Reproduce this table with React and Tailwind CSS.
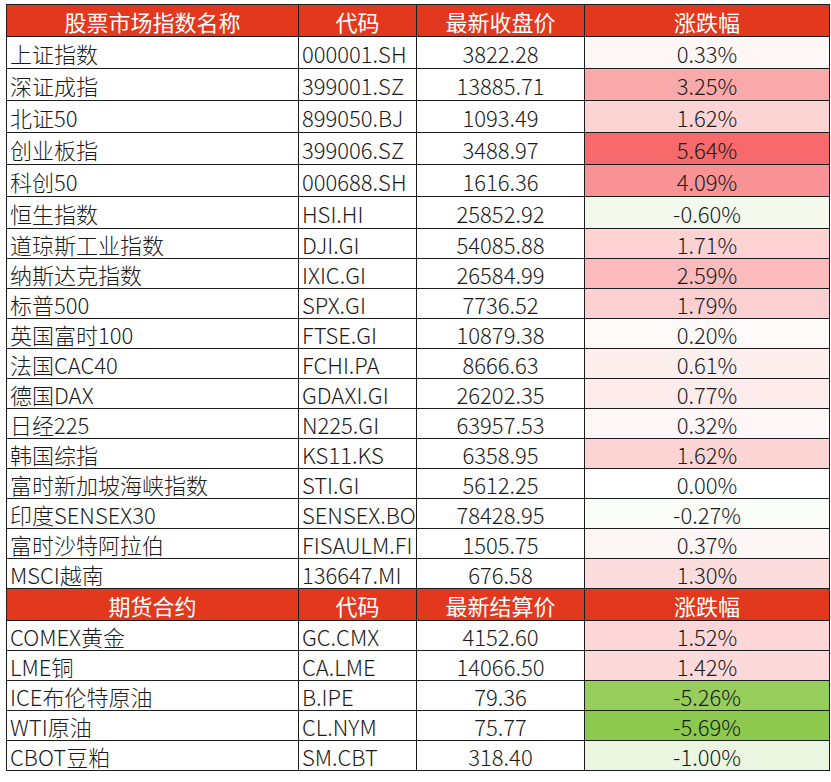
const indices = [
  ["上证指数", "000001.SH", "3822.28", 0.33],
  ["深证成指", "399001.SZ", "13885.71", 3.25],
  ["北证50", "899050.BJ", "1093.49", 1.62],
  ["创业板指", "399006.SZ", "3488.97", 5.64],
  ["科创50", "000688.SH", "1616.36", 4.09],
  ["恒生指数", "HSI.HI", "25852.92", -0.6],
  ["道琼斯工业指数", "DJI.GI", "54085.88", 1.71],
  ["纳斯达克指数", "IXIC.GI", "26584.99", 2.59],
  ["标普500", "SPX.GI", "7736.52", 1.79],
  ["英国富时100", "FTSE.GI", "10879.38", 0.2],
  ["法国CAC40", "FCHI.PA", "8666.63", 0.61],
  ["德国DAX", "GDAXI.GI", "26202.35", 0.77],
  ["日经225", "N225.GI", "63957.53", 0.32],
  ["韩国综指", "KS11.KS", "6358.95", 1.62],
  ["富时新加坡海峡指数", "STI.GI", "5612.25", 0.0],
  ["印度SENSEX30", "SENSEX.BO", "78428.95", -0.27],
  ["富时沙特阿拉伯", "FISAULM.FI", "1505.75", 0.37],
  ["MSCI越南", "136647.MI", "676.58", 1.3],
];

const futures = [
  ["COMEX黄金", "GC.CMX", "4152.60", 1.52],
  ["LME铜", "CA.LME", "14066.50", 1.42],
  ["ICE布伦特原油", "B.IPE", "79.36", -5.26],
  ["WTI原油", "CL.NYM", "75.77", -5.69],
  ["CBOT豆粕", "SM.CBT", "318.40", -1.0],
];

// colour scale: white -> red for gains, white -> green for losses
const RED = [247, 105, 107];
const GREEN = [141, 201, 78];
const MAX_UP = 5.64;
const MAX_DOWN = 5.69;

function scaleColor(v) {
  const end = v >= 0 ? RED : GREEN;
  const t = Math.min(Math.abs(v) / (v >= 0 ? MAX_UP : MAX_DOWN), 1);
  const c = end.map((e) => Math.round(255 - t * (255 - e)));
  return `rgb(${c[0]}, ${c[1]}, ${c[2]})`;
}

const fmt = (v) => `${v.toFixed(2)}%`;

const HeaderRow = ({ cols }) => (
  <tr className="h-[32px] bg-[#e2391e] text-white">
    {cols.map((c) => (
      <th key={c} className="border border-[#1c1c1c] px-1 text-center font-normal">
        {c}
      </th>
    ))}
  </tr>
);

const DataRow = ({ row, h }) => {
  const [name, code, price, chg] = row;
  return (
    <tr className={h}>
      <td className="border border-[#1c1c1c] pl-[3px] whitespace-nowrap overflow-hidden">
        {name}
      </td>
      <td className="border border-[#1c1c1c] pl-[3px] whitespace-nowrap overflow-hidden">
        {code}
      </td>
      <td className="border border-[#1c1c1c] text-center">{price}</td>
      <td
        className="border border-[#1c1c1c] text-center"
        style={{ backgroundColor: scaleColor(chg) }}
      >
        {fmt(chg)}
      </td>
    </tr>
  );
};

export default function App() {
  return (
    <div className="min-h-screen bg-white pl-[6px] pt-[4px]">
      <table
        className="w-[823px] table-fixed border-collapse text-[22px] leading-none text-[#1a1a1a] font-light"
        style={{ fontFamily: '"Noto Sans CJK SC", "Noto Sans", sans-serif' }}
      >
        <colgroup>
          <col className="w-[292px]" />
          <col className="w-[118px]" />
          <col className="w-[168px]" />
          <col className="w-[245px]" />
        </colgroup>
        <tbody>
          <HeaderRow cols={["股票市场指数名称", "代码", "最新收盘价", "涨跌幅"]} />
          {indices.map((r, i) => (
            <DataRow key={r[1]} row={r} h={i < 6 ? "h-[32px]" : "h-[30px]"} />
          ))}
          <HeaderRow cols={["期货合约", "代码", "最新结算价", "涨跌幅"]} />
          {futures.map((r) => (
            <DataRow key={r[1]} row={r} h="h-[30px]" />
          ))}
        </tbody>
      </table>
    </div>
  );
}
